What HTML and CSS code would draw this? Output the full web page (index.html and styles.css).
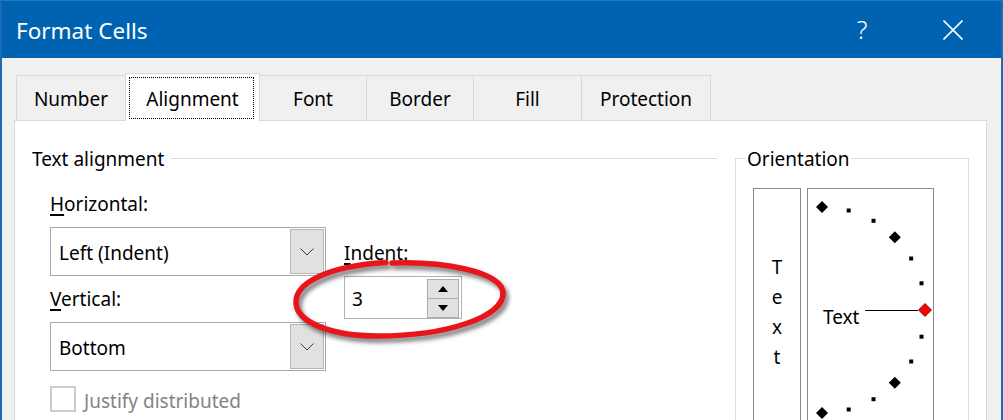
FILE: index.html
```html
<!DOCTYPE html>
<html lang="en">
<head>
<meta charset="utf-8">
<title>Format Cells</title>
<link rel="stylesheet" href="styles.css">
</head>
<body>
<div class="window">
  <header class="titlebar">
    <h1 class="title">Format Cells</h1>
    <div class="caption-buttons">
      <span class="cap-btn help">?</span>
      <span class="cap-btn close"><svg width="20" height="20" viewBox="0 0 20 20"><path d="M0.5 0.5 L19.5 19.5 M19.5 0.5 L0.5 19.5" stroke="#fff" stroke-width="1.6" fill="none"/></svg></span>
    </div>
  </header>
  <main class="content">
    <nav class="tabs">
      <div class="tab tab-number">Number</div>
      <div class="tab tab-active tab-alignment">Alignment</div>
      <div class="tab tab-font">Font</div>
      <div class="tab tab-border">Border</div>
      <div class="tab tab-fill">Fill</div>
      <div class="tab tab-protection">Protection</div>
    </nav>
    <section class="panel">
      <div class="text-alignment">
        <div class="group-head"><span class="group-label">Text alignment</span><span class="rule"></span></div>
        <div class="fields">
          <div class="col-main">
            <div class="label"><u>H</u>orizontal:</div>
            <div class="combo">
              <span class="combo-value">Left (Indent)</span>
              <span class="combo-btn"><svg width="14" height="8" viewBox="0 0 14 8"><path d="M0.5 0.5 L7 7 L13.5 0.5" stroke="#3c3c3c" stroke-width="1" fill="none"/></svg></span>
            </div>
            <div class="label label-gap"><u>V</u>ertical:</div>
            <div class="combo">
              <span class="combo-value">Bottom</span>
              <span class="combo-btn"><svg width="14" height="8" viewBox="0 0 14 8"><path d="M0.5 0.5 L7 7 L13.5 0.5" stroke="#3c3c3c" stroke-width="1" fill="none"/></svg></span>
            </div>
            <div class="check">
              <span class="check-box"></span>
              <span class="check-label">Justify distributed</span>
            </div>
          </div>
          <div class="col-indent">
            <div class="label"><u>I</u>ndent:</div>
            <div class="spin">
              <span class="spin-value">3</span>
              <span class="spin-btns">
                <span class="spin-btn"><svg width="10" height="6" viewBox="0 0 10 6"><polygon points="5,0 10,6 0,6" fill="#000"/></svg></span>
                <span class="spin-btn spin-down"><svg width="10" height="6" viewBox="0 0 10 6"><polygon points="0,0 10,0 5,6" fill="#000"/></svg></span>
              </span>
            </div>
          </div>
        </div>
      </div>
      <div class="orientation">
        <div class="orient-title">Orientation</div>
        <div class="orient-boxes">
          <div class="vtext"><span>T</span><span>e</span><span>x</span><span>t</span></div>
          <div class="dial">
            <svg class="dial-svg" width="125" height="258" viewBox="0 0 125 258">
              <polygon points="14,12 20,18 14,24 8,18" fill="#000"/>
              <rect x="38.7" y="19.5" width="4" height="4" fill="#000"/>
              <rect x="63.5" y="29.8" width="4" height="4" fill="#000"/>
              <polygon points="86.8,42.2 92.8,48.2 86.8,54.2 80.8,48.2" fill="#000"/>
              <rect x="101.2" y="67.5" width="4" height="4" fill="#000"/>
              <rect x="111.5" y="92.3" width="4" height="4" fill="#000"/>
              <line x1="57" y1="121.5" x2="110" y2="121.5" stroke="#000" stroke-width="1"/>
              <polygon points="117,114.5 123.5,121 117,127.5 110.5,121" fill="#ff0000" stroke="#5a0000" stroke-width="0.8"/>
              <rect x="111.5" y="145.7" width="4" height="4" fill="#000"/>
              <rect x="101.2" y="170.5" width="4" height="4" fill="#000"/>
              <polygon points="86.8,187.8 92.8,193.8 86.8,199.8 80.8,193.8" fill="#000"/>
              <rect x="63.5" y="208.2" width="4" height="4" fill="#000"/>
              <rect x="38.7" y="218.5" width="4" height="4" fill="#000"/>
              <polygon points="14,218 20,224 14,230 8,224" fill="#000"/>
              <text x="15" y="135" class="dial-text">Text</text>
            </svg>
          </div>
        </div>
      </div>
    </section>
  </main>
  <svg class="annotation" width="1003" height="420" viewBox="0 0 1003 420">
    <path d="M392 263 C440 261 502 271 503 293 C504 317 446 336 378 336 C330 336 297 322 296 303 C295 283 328 266 386 262.5" fill="none" stroke="#e8161c" stroke-width="5.5" stroke-linecap="round"/>
  </svg>
</div>
</body>
</html>
```
FILE: styles.css
```css
* { box-sizing: border-box; }
html, body { margin: 0; padding: 0; }
body {
  width: 1003px;
  height: 420px;
  overflow: hidden;
  font-family: "Noto Sans", "Open Sans", sans-serif;
  font-size: 19px;
  line-height: 24px;
  color: #000;
  background: #f0f0f0;
}
.window {
  position: relative;
  width: 1003px;
  height: 420px;
  overflow: hidden;
  border-left: 2px solid #1a6cb5;
  border-right: 2px solid #1a6cb5;
  border-top: 1px solid #2a78bd;
  background: #f0f0f0;
  display: flex;
  flex-direction: column;
}
.titlebar {
  height: 57px;
  flex: none;
  background: #0063b1;
  color: #fff;
  display: flex;
  align-items: stretch;
}
.title {
  flex: 1;
  margin: 0;
  padding: 15px 0 0 14px;
  font-size: 22.5px;
  font-weight: normal;
  line-height: 30px;
}
.caption-buttons { display: flex; }
.cap-btn {
  display: flex;
  align-items: center;
  justify-content: center;
}
.help { width: 86px; font-size: 25px; font-weight: 300; padding-bottom: 1px; }
.close { width: 96px; }

.content {
  padding: 15px 14px 0 12px;
  display: flex;
  flex-direction: column;
}
.tabs {
  display: flex;
  align-items: flex-end;
  height: 47px;
  margin-left: 2px;
  position: relative;
  z-index: 1;
}
.tab {
  height: 45px;
  margin-left: -1px;
  border: 1px solid #d9d9d9;
  border-bottom: 0;
  padding-top: 11px;
  text-align: center;
  background: #f0f0f0;
}
.tab:first-child { margin-left: 0; }
.tab-active {
  position: relative;
  height: 48px;
  margin-bottom: -1px;
  padding-top: 13px;
  background: #fff;
  z-index: 1;
}
.tab-active::after {
  content: "";
  position: absolute;
  left: 3px;
  right: 5px;
  top: 3px;
  bottom: 2px;
  border: 1px dotted #000;
}
.tab-number { width: 110px; }
.tab-alignment { width: 135px; }
.tab-font { width: 108px; }
.tab-border { width: 108px; }
.tab-fill { width: 109px; }
.tab-protection { width: 130px; }

.panel {
  height: 340px;
  flex: none;
  border: 1px solid #d9d9d9;
  background: #fff;
  display: flex;
  padding: 26px 0 0 17px;
}
.text-alignment { width: 685px; flex: none; }
.group-head { display: flex; }
.rule {
  flex: 1;
  height: 1px;
  margin: 11px 0 0 7px;
  background: #dcdcdc;
}
.fields {
  display: flex;
  padding-left: 18px;
  margin-top: 21px;
}
.col-main { width: 276px; }
.label { height: 24px; }
.label u { text-underline-offset: 3px; text-decoration-thickness: 1.5px; }
.label-gap { margin-top: 11px; }
.combo {
  margin-top: 11px;
  height: 49px;
  border: 1px solid #a9a9a9;
  display: flex;
  background: #fff;
}
.combo-value {
  flex: 1;
  align-self: center;
  padding: 2px 0 0 8px;
}
.combo-btn {
  width: 34px;
  margin: 1px;
  background: #e1e1e1;
  border: 1px solid #b5b5b5;
  display: flex;
  align-items: center;
  justify-content: center;
}
.combo-btn svg { display: block; }
.check {
  display: flex;
  align-items: center;
  margin-top: 15px;
  height: 26px;
}
.check-box {
  width: 26px;
  height: 26px;
  border: 2px solid #cccccc;
  flex: none;
}
.check-label {
  margin-left: 8px;
  padding-top: 3px;
  color: #838383;
}
.col-indent {
  margin-left: 18px;
  padding-top: 49px;
}
.spin {
  margin-top: 11px;
  width: 118px;
  height: 43px;
  border: 1px solid #b0b0b0;
  display: flex;
}
.spin-value {
  flex: 1;
  align-self: center;
  padding: 2px 0 0 7px;
}
.spin-btns {
  display: flex;
  flex-direction: column;
  width: 32px;
  margin: 2px 2px 0 0;
}
.spin-btn {
  height: 20px;
  border: 1px solid #adadad;
  background: #e1e1e1;
  display: flex;
  align-items: center;
  justify-content: center;
}
.spin-btn svg { display: block; }
.spin-down { margin-top: -1px; }

.orientation {
  width: 234px;
  height: 300px;
  flex: none;
  align-self: flex-start;
  margin: 11px 0 0 18px;
  border: 1px solid #dcdcdc;
  padding-left: 17px;
}
.orient-title {
  width: fit-content;
  margin: -12px 0 0 -7px;
  padding: 0 1px;
  background: #fff;
}
.orient-boxes {
  display: flex;
  gap: 6px;
  margin-top: 17px;
}
.vtext {
  width: 48px;
  height: 260px;
  border: 1px solid #8a8a8a;
  display: flex;
  flex-direction: column;
  align-items: center;
  padding-top: 63px;
  line-height: 30px;
}
.dial {
  width: 127px;
  height: 260px;
  border: 1px solid #8a8a8a;
}
.dial-svg { display: block; }
.dial-text { font-family: "Noto Sans", "Open Sans", sans-serif; font-size: 19px; fill: #000; }

.annotation {
  position: absolute;
  left: -2px;
  top: -1px;
  pointer-events: none;
  filter: drop-shadow(3px 4px 2px rgba(0, 0, 0, 0.5));
}
```
